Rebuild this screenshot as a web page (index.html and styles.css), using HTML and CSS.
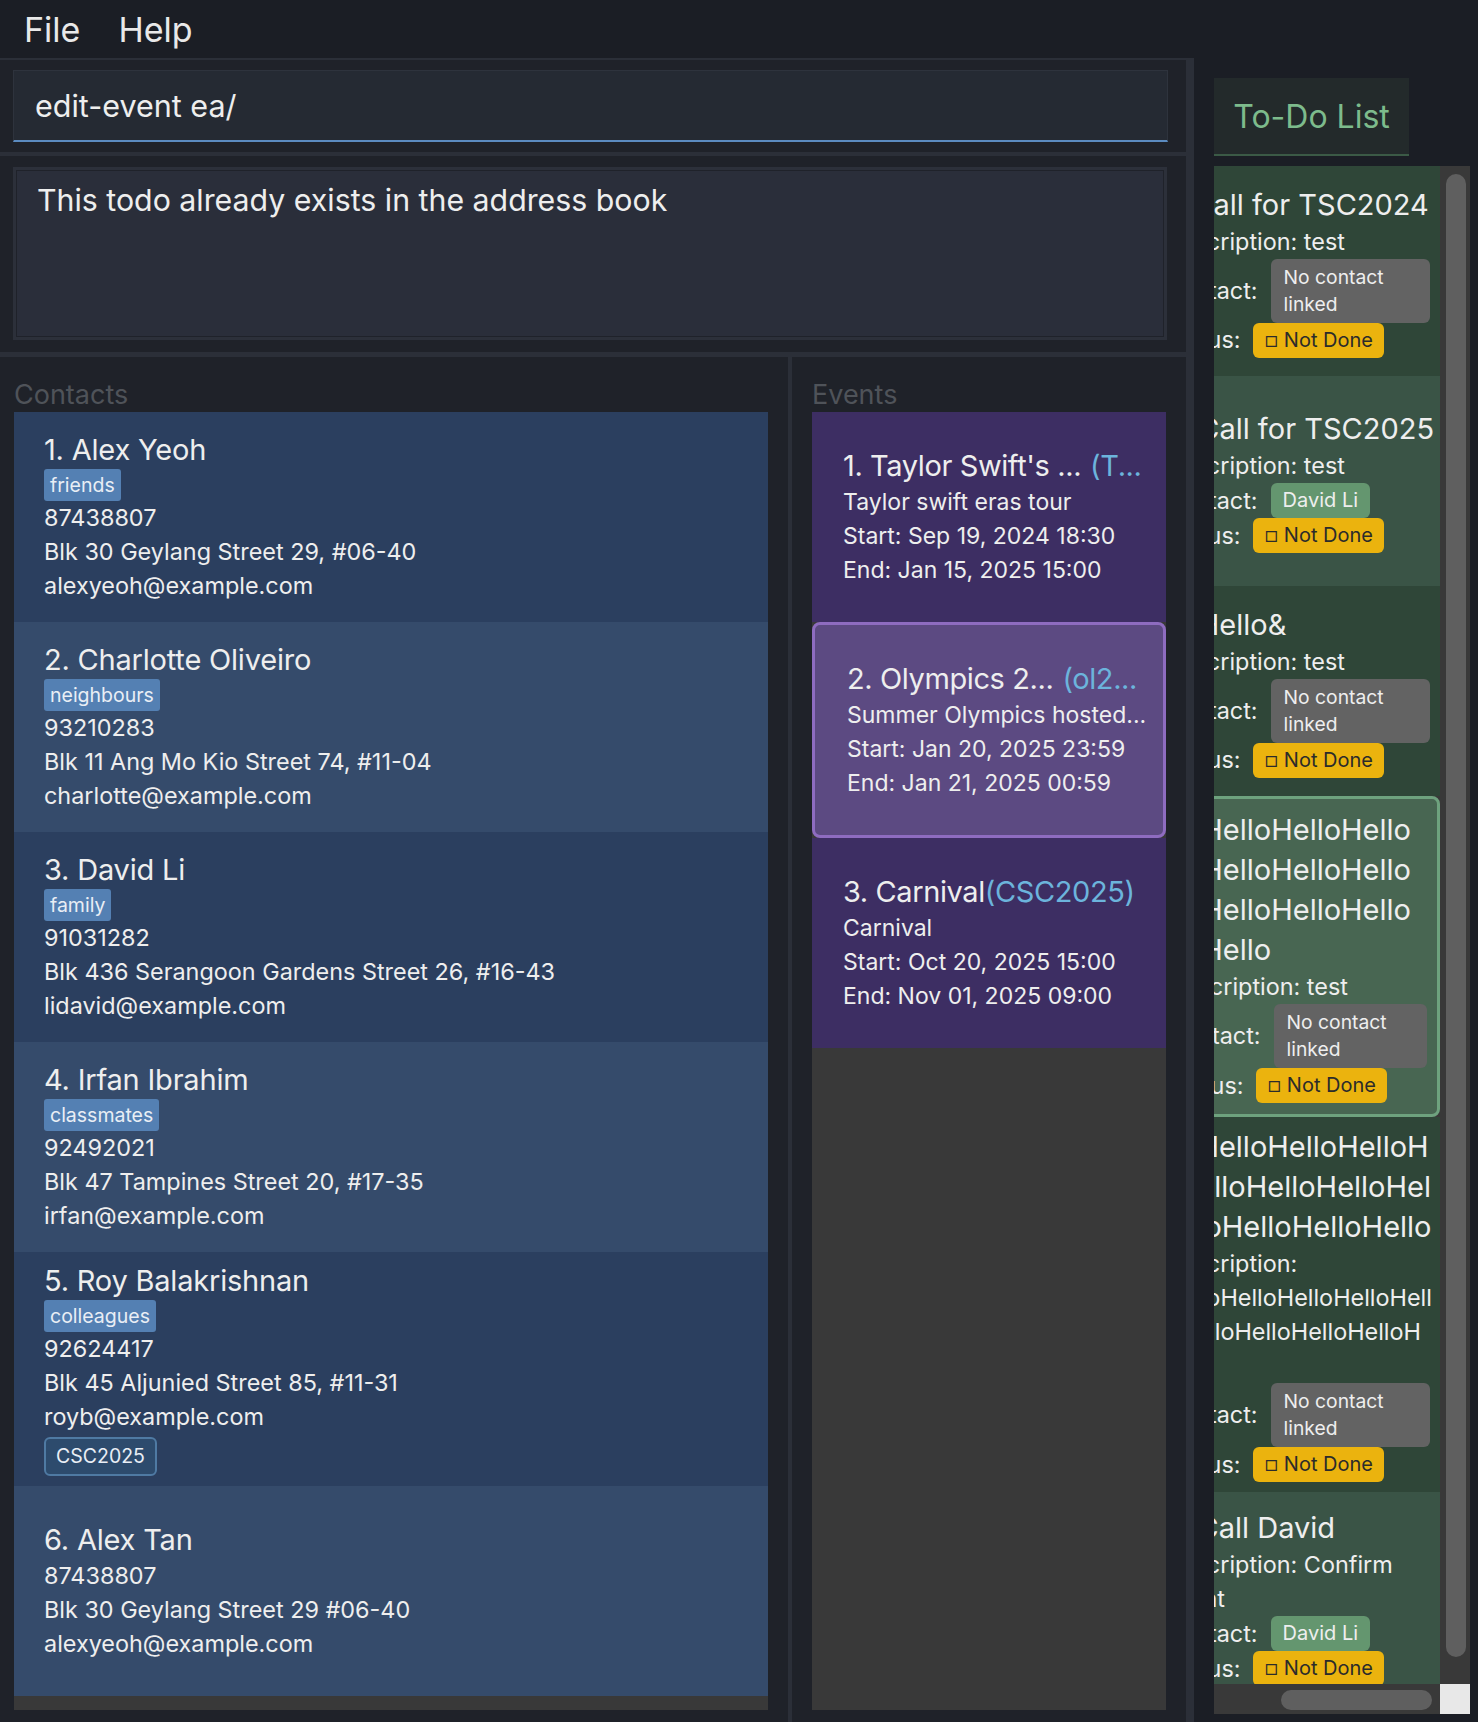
FILE: index.html
```html
<!DOCTYPE html>
<html>
<head>
<meta charset="utf-8">
<title>Address Book</title>
<link rel="stylesheet" href="styles.css">
</head>
<body>
<div class="app">
  <div class="menubar"><span>File</span><span>Help</span></div>
  <div class="main">
    <div class="left">
      <div class="command-pane"><div class="command-box">edit-event ea/</div></div>
      <div class="result-pane"><div class="result-box">This todo already exists in the address book</div></div>
      <div class="lists-pane">
        <div class="col contacts-col">
          <div class="col-title">Contacts</div>
          <div class="list">
            <div class="contact odd">
              <div class="name">1. Alex Yeoh</div>
              <div class="tags"><span class="tag">friends</span></div>
              <div class="line">87438807</div>
              <div class="line">Blk 30 Geylang Street 29, #06-40</div>
              <div class="line">alexyeoh@example.com</div>
            </div>
            <div class="contact even">
              <div class="name">2. Charlotte Oliveiro</div>
              <div class="tags"><span class="tag">neighbours</span></div>
              <div class="line">93210283</div>
              <div class="line">Blk 11 Ang Mo Kio Street 74, #11-04</div>
              <div class="line">charlotte@example.com</div>
            </div>
            <div class="contact odd">
              <div class="name">3. David Li</div>
              <div class="tags"><span class="tag">family</span></div>
              <div class="line">91031282</div>
              <div class="line">Blk 436 Serangoon Gardens Street 26, #16-43</div>
              <div class="line">lidavid@example.com</div>
            </div>
            <div class="contact even">
              <div class="name">4. Irfan Ibrahim</div>
              <div class="tags"><span class="tag">classmates</span></div>
              <div class="line">92492021</div>
              <div class="line">Blk 47 Tampines Street 20, #17-35</div>
              <div class="line">irfan@example.com</div>
            </div>
            <div class="contact odd">
              <div class="name">5. Roy Balakrishnan</div>
              <div class="tags"><span class="tag">colleagues</span></div>
              <div class="line">92624417</div>
              <div class="line">Blk 45 Aljunied Street 85, #11-31</div>
              <div class="line">royb@example.com</div>
              <div class="evtags"><span class="evtag">CSC2025</span></div>
            </div>
            <div class="contact even">
              <div class="name">6. Alex Tan</div>
              <div class="line">87438807</div>
              <div class="line">Blk 30 Geylang Street 29 #06-40</div>
              <div class="line">alexyeoh@example.com</div>
            </div>
          </div>
        </div>
        <div class="vdivider"></div>
        <div class="col events-col">
          <div class="col-title">Events</div>
          <div class="list">
            <div class="event">
              <div class="etitle"><span class="ename gap">1. Taylor Swift's ...</span><span class="ecode">(T...</span></div>
              <div class="line">Taylor swift eras tour</div>
              <div class="line">Start: Sep 19, 2024 18:30</div>
              <div class="line">End: Jan 15, 2025 15:00</div>
            </div>
            <div class="event selected">
              <div class="etitle"><span class="ename gap">2. Olympics 2...</span><span class="ecode">(ol2...</span></div>
              <div class="line">Summer Olympics hosted...</div>
              <div class="line">Start: Jan 20, 2025 23:59</div>
              <div class="line">End: Jan 21, 2025 00:59</div>
            </div>
            <div class="event">
              <div class="etitle"><span class="ename">3. Carnival</span><span class="ecode">(CSC2025)</span></div>
              <div class="line">Carnival</div>
              <div class="line">Start: Oct 20, 2025 15:00</div>
              <div class="line">End: Nov 01, 2025 09:00</div>
            </div>
          </div>
        </div>
      </div>
    </div>
    <div class="right">
      <div class="tab">To-Do List</div>
      <div class="todo-frame">
        <div class="todo-viewport">
          <div class="todo-content">
            <div class="tcard dark">
              <div class="ttitle"><span class="tid">1.&nbsp;</span><span class="tname">Call for TSC2024</span></div>
              <div class="tline">Description: test</div>
              <div class="trow"><span class="tlabel">Contact:</span><span class="pill nocontact">No contact linked</span></div>
              <div class="trow"><span class="tlabel">Status:</span><span class="pill status"><span class="box">□</span> Not Done</span></div>
            </div>
            <div class="tcard light">
              <div class="ttitle"><span class="tid">2.&nbsp;</span><span class="tname">Call for TSC2025</span></div>
              <div class="tline">Description: test</div>
              <div class="trow"><span class="tlabel">Contact:</span><span class="pill linked">David Li</span></div>
              <div class="trow"><span class="tlabel">Status:</span><span class="pill status"><span class="box">□</span> Not Done</span></div>
            </div>
            <div class="tcard dark">
              <div class="ttitle"><span class="tid">3.&nbsp;</span><span class="tname">Hello&amp;</span></div>
              <div class="tline">Description: test</div>
              <div class="trow"><span class="tlabel">Contact:</span><span class="pill nocontact">No contact linked</span></div>
              <div class="trow"><span class="tlabel">Status:</span><span class="pill status"><span class="box">□</span> Not Done</span></div>
            </div>
            <div class="tcard tselected">
              <div class="ttitle"><span class="tid">4.&nbsp;</span><span class="tname">HelloHelloHello<br>HelloHelloHello<br>HelloHelloHello<br>Hello</span></div>
              <div class="tline">Description: test</div>
              <div class="trow"><span class="tlabel">Contact:</span><span class="pill nocontact">No contact linked</span></div>
              <div class="trow"><span class="tlabel">Status:</span><span class="pill status"><span class="box">□</span> Not Done</span></div>
            </div>
            <div class="tcard dark">
              <div class="ttitle"><span class="tid">5.&nbsp;</span><span class="tname">HelloHelloHelloH<br>elloHelloHelloHel<br>loHelloHelloHello</span></div>
              <div class="tline">Description:<br>HelloHelloHelloHelloHell<br>oHelloHelloHelloHelloH<br>ello</div>
              <div class="trow"><span class="tlabel">Contact:</span><span class="pill nocontact">No contact linked</span></div>
              <div class="trow"><span class="tlabel">Status:</span><span class="pill status"><span class="box">□</span> Not Done</span></div>
            </div>
            <div class="tcard light">
              <div class="ttitle"><span class="tid">6.&nbsp;</span><span class="tname">Call David</span></div>
              <div class="tline">Description: Confirm<br>event</div>
              <div class="trow"><span class="tlabel">Contact:</span><span class="pill linked">David Li</span></div>
              <div class="trow"><span class="tlabel">Status:</span><span class="pill status"><span class="box">□</span> Not Done</span></div>
            </div>
          </div>
        </div>
        <div class="vscroll"><div class="vthumb"></div></div>
        <div class="hscroll"><div class="hthumb"></div></div>
        <div class="corner"></div>
      </div>
    </div>
  </div>
</div>
</body>
</html>
```
FILE: styles.css
```css
* { box-sizing: border-box; }
html, body { margin: 0; padding: 0; }
body {
  background: #1b1e25;
  font-family: Inter, "Noto Sans", sans-serif;
  color: #eeeeee;
  width: 1478px;
  height: 1722px;
  overflow: hidden;
}
.app { display: flex; flex-direction: column; width: 1478px; height: 1722px; }

.menubar {
  height: 58px; flex: none;
  display: flex; align-items: center; gap: 38px;
  padding-left: 24px;
  font-size: 34px; color: #e9e9e9;
  background: #1b1e25;
}

.main { flex: 1; display: flex; min-height: 0; }

.left {
  width: 1194px; flex: none;
  background: #2b2f38;
  padding: 2px 8px 0 0;
  display: flex; flex-direction: column;
}
.command-pane {
  height: 92px; flex: none;
  background: #1f2229;
  padding: 10px 18px 10px 13px;
}
.command-box {
  height: 72px;
  background: #252a33;
  border: 1px solid #2e333d;
  border-bottom: 2px solid #5b8bc0;
  padding-left: 21px;
  font-size: 30.5px;
  display: flex; align-items: center;
}
.result-pane {
  height: 196px; flex: none;
  margin-top: 4px;
  background: #1f2229;
  padding: 11px 19px 12px 13px;
}
.result-box {
  height: 173px;
  background: #2a2e3a;
  border: 3px solid #2c303a;
  box-shadow: inset 0 0 0 1px #1f222a;
  padding: 12px 21px;
  font-size: 30.3px;
}
.lists-pane { flex: 1; margin-top: 5px; display: flex; min-height: 0; min-width: 0; }
.col {
  display: flex; flex-direction: column;
  background: #1f2229;
  padding: 0 20px 12px 20px;
  min-width: 0;
}
.contacts-col { width: 788px; flex: none; padding-left: 14px; }
.events-col { flex: 1 1 0; min-width: 0; }
.vdivider { width: 4px; flex: none; background: #2b2f38; }
.col-title {
  font-size: 27px; line-height: 30px;
  padding-top: 23px; margin-bottom: 2px;
  color: #4f5359;
}
.list { flex: 1; background: #393939; overflow: hidden; min-width: 0; }

.contact {
  min-height: 210px;
  padding: 10px 30px;
  display: flex; flex-direction: column; justify-content: center;
}
.contact.odd { background: #2b3f5f; }
.contact.even { background: #354b6b; }
.name { font-size: 29px; letter-spacing: -0.2px; line-height: 38px; white-space: nowrap; }
.tags { display: flex; }
.tag {
  height: 32px; line-height: 32px;
  font-size: 19.5px;
  padding: 0 6px;
  border-radius: 3px;
  background: #5480b3;
  color: #e9eef5;
}
.line { font-size: 23.4px; line-height: 34px; white-space: nowrap; }
.evtags { display: flex; margin-top: 3px; }
.evtag {
  height: 39px; line-height: 35px;
  font-size: 19.5px;
  padding: 0 10px;
  border: 2px solid #4f7aa3;
  border-radius: 6px;
  background: #2d4b6d;
  color: #e9eef5;
}

.event {
  min-height: 210px;
  padding: 10px 8px 10px 31px;
  display: flex; flex-direction: column; justify-content: center;
  background: #3d2e63;
}
.event .line { font-size: 23px; }
.event.selected {
  min-height: 216px;
  background: #5c4a82;
  border: 3px solid #8e6cc0;
  border-radius: 8px;
  padding-left: 32px;
  padding-right: 5px;
}
.etitle { display: flex; font-size: 29px; letter-spacing: -0.4px; line-height: 38px; white-space: nowrap; }
.ename.gap { margin-right: 9px; }
.ecode { color: #6cb4dc; }

.right {
  flex: 1;
  display: flex; flex-direction: column;
  padding: 20px 8px 8px 20px;
  background: #1b1e25;
}
.tab {
  width: 195px; height: 78px; flex: none;
  background: #232a2b;
  border-bottom: 2px solid #3b5a46;
  color: #7dbb8c;
  font-size: 32px;
  display: flex; align-items: center; justify-content: center;
  margin-bottom: 10px;
}
.todo-frame {
  flex: 1;
  display: grid;
  grid-template-columns: 226px 30px;
  grid-template-rows: 1518px 30px;
}
.todo-viewport { overflow: hidden; background: #393939; }
.todo-content { width: 306px; margin-left: -80px; }
.tcard {
  min-height: 210px;
  padding: 10px 10px 10px 30px;
  display: flex; flex-direction: column; justify-content: center;
}
.tcard.dark { background: #2f4638; }
.tcard.light { background: #3a5446; }
.tcard.tselected {
  background: #486652;
  border: 3px solid #6ea27e;
  border-radius: 8px;
  padding-top: 11px; padding-bottom: 11px;
}
.ttitle { display: flex; font-size: 29px; line-height: 40px; }
.tid { flex: none; white-space: nowrap; }
.tname { white-space: nowrap; }
.tline { font-size: 23.4px; line-height: 34px; white-space: nowrap; }
.trow { display: flex; align-items: center; gap: 13px; font-size: 23.4px; line-height: 34px; white-space: nowrap; }
.pill { border-radius: 6px; color: #eeeeee; }
.pill.nocontact {
  width: 160px; white-space: normal;
  padding: 5px 13px;
  font-size: 19.3px; line-height: 27px;
  background: #636363;
}
.pill.linked {
  height: 35px; line-height: 35px;
  padding: 0 12px;
  font-size: 20px;
  background: #64966f;
}
.pill.status {
  height: 35px; line-height: 35px;
  padding: 0 11px;
  font-size: 20px;
  background: #ebb30e;
  color: #2b2b2b;
}
.box { font-size: 15px; }

.vscroll { background: #393939; padding: 8px 4px 27px 6px; }
.vthumb { height: 100%; background: #5f5f5f; border-radius: 10px; }
.hscroll { background: #393939; padding: 6px 8px 4px 67px; }
.hthumb { height: 100%; background: #5f5f5f; border-radius: 10px; }
.corner { background: #e8e8e8; }
```
